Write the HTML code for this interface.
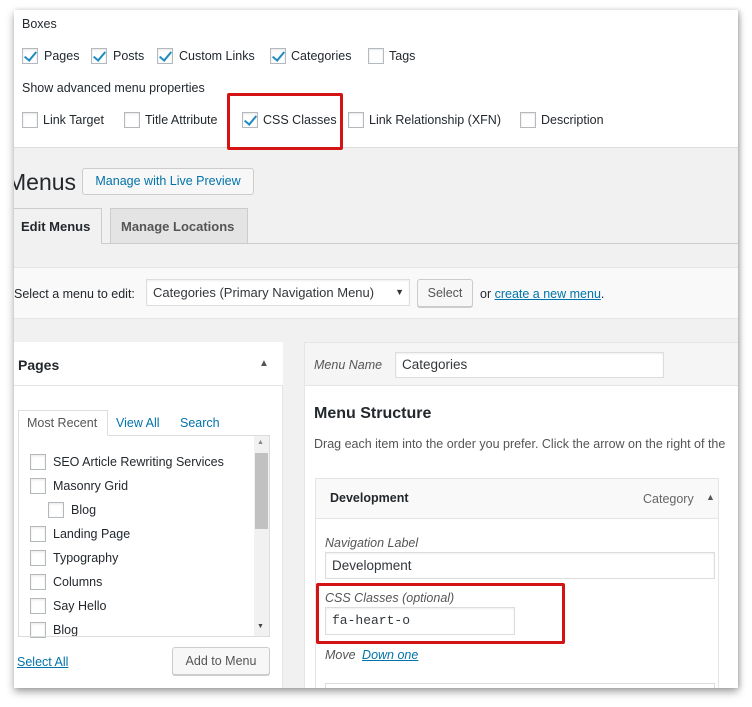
<!DOCTYPE html>
<html><head><meta charset="utf-8"><style>
*{box-sizing:border-box;margin:0;padding:0}
body{width:752px;height:707px;background:#fff;font-family:"Liberation Sans",sans-serif;font-size:12.5px;color:#23282d;position:relative;overflow:hidden}
.a{position:absolute;white-space:nowrap}
#page{position:absolute;left:14px;top:10px;width:724px;height:678px;background:#f1f1f1;overflow:hidden;box-shadow:0 4px 8px rgba(0,0,0,.35),2px 0 4px rgba(0,0,0,.15)}
.cb{position:absolute;width:16px;height:16px;border:1px solid #b4b9be;background:#fff;box-shadow:inset 0 1px 2px rgba(0,0,0,.1)}
.cb.on::after{content:"";position:absolute;left:4px;top:0px;width:5px;height:10px;border:solid #1e8cbe;border-width:0 2px 2px 0;transform:rotate(40deg)}
.btn{position:absolute;border:1px solid #ccc;background:#f7f7f7;border-radius:3px;box-shadow:0 1px 0 #ccc;text-align:center;color:#555}
.inp{position:absolute;border:1px solid #ddd;background:#fff;box-shadow:inset 0 1px 2px rgba(0,0,0,.07);padding-left:6px;color:#32373c;font-size:13.5px}
.link{color:#0073aa}
.red{position:absolute;border:3px solid #d41414;border-radius:2px}
</style></head><body>
<div id="page">
 <div class="a" style="left:0;top:0;width:724px;height:138px;background:#fff;border-bottom:1px solid #ddd"></div>
 <div class="a" style="left:8px;top:7px;">Boxes</div>
 <div class="cb on" style="left:8px;top:38px"></div><div class="a" style="left:30px;top:39px">Pages</div>
 <div class="cb on" style="left:77px;top:38px"></div><div class="a" style="left:99px;top:39px">Posts</div>
 <div class="cb on" style="left:143px;top:38px"></div><div class="a" style="left:165px;top:39px">Custom Links</div>
 <div class="cb on" style="left:256px;top:38px"></div><div class="a" style="left:277px;top:39px">Categories</div>
 <div class="cb" style="left:354px;top:38px"></div><div class="a" style="left:375px;top:39px">Tags</div>
 <div class="a" style="left:8px;top:71px">Show advanced menu properties</div>
 <div class="cb" style="left:8px;top:102px"></div><div class="a" style="left:29px;top:103px">Link Target</div>
 <div class="cb" style="left:110px;top:102px"></div><div class="a" style="left:131px;top:103px">Title Attribute</div>
 <div class="cb on" style="left:228px;top:102px"></div><div class="a" style="left:249px;top:103px">CSS Classes</div>
 <div class="cb" style="left:334px;top:102px"></div><div class="a" style="left:355px;top:103px">Link Relationship (XFN)</div>
 <div class="cb" style="left:506px;top:102px"></div><div class="a" style="left:527px;top:103px">Description</div>
 <div class="red" style="left:213px;top:83px;width:116px;height:57px"></div>

 <div class="a" style="left:-7px;top:159px;font-size:23px;color:#23282d">Menus</div>
 <div class="btn" style="left:68px;top:158px;width:172px;height:27px;line-height:25px;color:#0073aa;background:#f7f7f7;box-shadow:none">Manage with Live Preview</div>
 <div class="a" style="left:-1px;top:233px;width:725px;border-top:1px solid #ccc"></div>
 <div class="a" style="left:-1px;top:198px;width:89px;height:36px;background:#f1f1f1;border:1px solid #ccc;border-bottom:none;font-weight:bold;font-size:13px;padding:10px 0 0 7px">Edit Menus</div>
 <div class="a" style="left:96px;top:198px;width:138px;height:35px;background:#e4e4e4;border:1px solid #ccc;border-bottom:none;font-weight:bold;font-size:13px;padding:10px 0 0 10px;color:#555">Manage Locations</div>

 <div class="a" style="left:-1px;top:257px;width:725px;height:52px;background:#f9f9f9;border-top:1px solid #e5e5e5;border-bottom:1px solid #e5e5e5"></div>
 <div class="a" style="left:0;top:277px">Select a menu to edit:</div>
 <div class="inp" style="left:132px;top:269px;width:264px;height:27px;line-height:25px;font-size:13px">Categories (Primary Navigation Menu) <span style="position:absolute;right:5px;font-size:9px">▼</span></div>
 <div class="btn" style="left:403px;top:269px;width:56px;height:28px;line-height:26px">Select</div>
 <div class="a" style="left:466px;top:277px">or <span class="link" style="text-decoration:underline">create a new menu</span>.</div>

 <div class="a" style="left:-1px;top:332px;width:270px;height:360px;background:#fff;border:1px solid #e5e5e5"></div>
 <div class="a" style="left:-1px;top:332px;width:270px;height:44px;border-bottom:1px solid #e5e5e5;background:#fff"></div>
 <div class="a" style="left:4px;top:347px;font-size:14px;font-weight:bold;color:#23282d">Pages</div>
 <div class="a" style="left:245px;top:348px;font-size:10px;color:#555">▲</div>
 <div class="a" style="left:4px;top:425px;width:252px;height:202px;border:1px solid #ddd;background:#fff"></div>
 <div class="a" style="left:4px;top:400px;width:90px;height:26px;border:1px solid #ddd;border-bottom:1px solid #fff;background:#fff;padding:5px 0 0 8px;color:#555">Most Recent</div>
 <div class="a link" style="left:102px;top:406px">View All</div>
 <div class="a link" style="left:166px;top:406px">Search</div>
 <div class="a" style="left:240px;top:426px;width:15px;height:200px;background:#f1f1f1"></div>
 <div class="a" style="left:241px;top:443px;width:13px;height:76px;background:#c1c1c1"></div>
 <div class="a" style="left:243px;top:429px;font-size:7px;color:#888">▲</div>
 <div class="a" style="left:243px;top:613px;font-size:7px;color:#444">▼</div>
 <div class="cb" style="left:16px;top:444px"></div><div class="a" style="left:39px;top:445px">SEO Article Rewriting Services</div>
 <div class="cb" style="left:16px;top:468px"></div><div class="a" style="left:39px;top:469px">Masonry Grid</div>
 <div class="cb" style="left:34px;top:492px"></div><div class="a" style="left:57px;top:493px">Blog</div>
 <div class="cb" style="left:16px;top:516px"></div><div class="a" style="left:39px;top:517px">Landing Page</div>
 <div class="cb" style="left:16px;top:540px"></div><div class="a" style="left:39px;top:541px">Typography</div>
 <div class="cb" style="left:16px;top:564px"></div><div class="a" style="left:39px;top:565px">Columns</div>
 <div class="cb" style="left:16px;top:588px"></div><div class="a" style="left:39px;top:589px">Say Hello</div>
 <div class="cb" style="left:16px;top:612px"></div><div class="a" style="left:39px;top:613px">Blog</div>
 <div class="a" style="left:5px;top:626px;width:250px;height:1px;background:#ddd"></div>
 <div class="a link" style="left:3px;top:645px;text-decoration:underline">Select All</div>
 <div class="btn" style="left:158px;top:637px;width:98px;height:28px;line-height:26px">Add to Menu</div>

 <div class="a" style="left:290px;top:332px;width:440px;height:360px;background:#fff;border:1px solid #e5e5e5"></div>
 <div class="a" style="left:290px;top:332px;width:440px;height:44px;background:#f5f5f5;border:1px solid #e5e5e5"></div>
 <div class="a" style="left:300px;top:348px;font-style:italic;color:#555">Menu Name</div>
 <div class="inp" style="left:381px;top:342px;width:269px;height:26px;line-height:24px">Categories</div>
 <div class="a" style="left:300px;top:395px;font-size:16px;font-weight:bold">Menu Structure</div>
 <div class="a" style="left:300px;top:427px;color:#555">Drag each item into the order you prefer. Click the arrow on the right of the</div>
 <div class="a" style="left:301px;top:468px;width:404px;height:240px;border:1px solid #e5e5e5;background:#fff"></div>
 <div class="a" style="left:301px;top:468px;width:404px;height:41px;border:1px solid #e5e5e5;background:#f9f9f9"></div>
 <div class="a" style="left:316px;top:481px;font-weight:bold">Development</div>
 <div class="a" style="left:629px;top:482px;color:#666">Category</div>
 <div class="a" style="left:692px;top:482px;font-size:9px;color:#555">▲</div>
 <div class="a" style="left:311px;top:526px;font-style:italic;color:#555">Navigation Label</div>
 <div class="inp" style="left:311px;top:542px;width:390px;height:27px;line-height:25px">Development</div>
 <div class="red" style="left:302px;top:573px;width:249px;height:61px"></div>
 <div class="a" style="left:311px;top:581px;font-style:italic;color:#555">CSS Classes (optional)</div>
 <div class="inp" style="left:311px;top:597px;width:190px;height:28px;line-height:26px;font-family:'Liberation Mono',monospace;font-size:13px">fa-heart-o</div>
 <div class="a" style="left:311px;top:638px;font-style:italic;color:#555">Move <span class="link" style="text-decoration:underline;margin-left:3px">Down one</span></div>
 <div class="a" style="left:311px;top:673px;width:390px;height:20px;border:1px solid #ddd"></div>
</div>
</body></html>
